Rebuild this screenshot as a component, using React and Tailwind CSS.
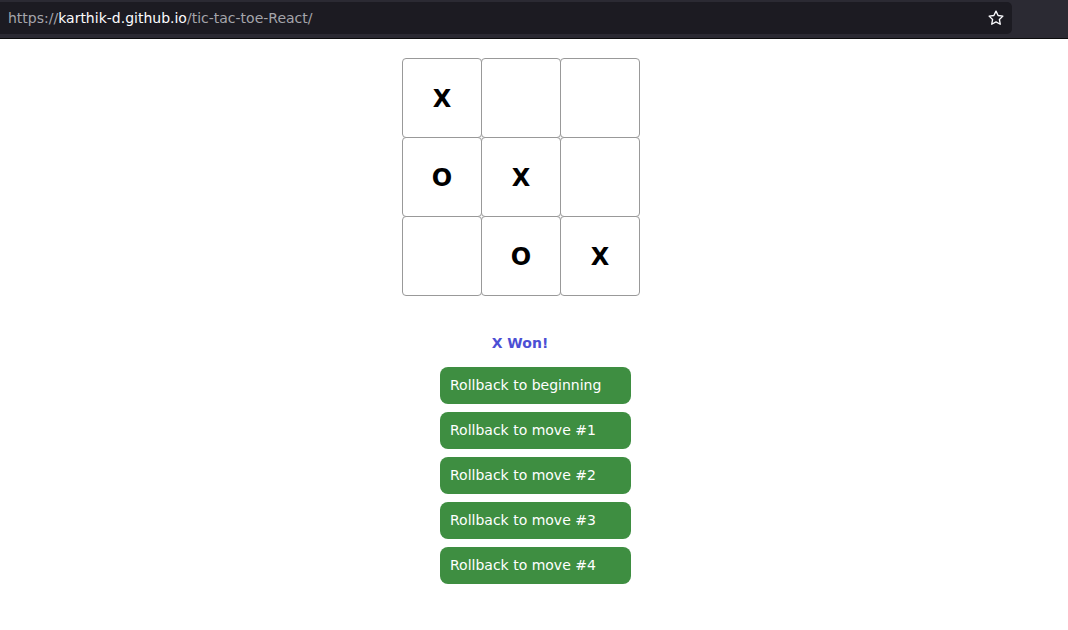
import React from "react";

const board = ["X", "", "", "O", "X", "", "", "O", "X"];
const moves = ["Rollback to beginning", "Rollback to move #1", "Rollback to move #2", "Rollback to move #3", "Rollback to move #4"];

function Star() {
  return (
    <svg width="18" height="18" viewBox="0 0 24 24" fill="none" stroke="#fbfbfe" strokeWidth="1.8" strokeLinejoin="round">
      <path d="M12 2.8l2.8 5.9 6.4.8-4.7 4.4 1.2 6.4L12 17.2l-5.7 3.1 1.2-6.4-4.7-4.4 6.4-.8z" />
    </svg>
  );
}

export default function App() {
  return (
    <div className="w-[1068px] h-[630px] bg-white overflow-hidden" style={{ fontFamily: '"DejaVu Sans", sans-serif' }}>
      <div className="h-[39px] bg-[#2b2a33] border-b border-[#0c0c0d] pt-[2px] flex">
        <div className="w-[1012px] h-[32px] bg-[#1c1b22] rounded-r-[5px] flex items-center pl-[8px] pr-[7px] justify-between">
          <div className="text-[14px] text-[#a5a5ab] tracking-[0px]">
            https://<span className="text-[#fbfbfe]">karthik-d.github.io</span>/tic-tac-toe-React/
          </div>
          <Star />
        </div>
      </div>
      <div className="flex flex-col items-start pl-[402px] pt-[19px]">
        <div className="flex flex-col">
          {[0, 1, 2].map((r) => (
            <div key={r} className="flex -mb-px">
              {[0, 1, 2].map((c) => (
                <div
                  key={c}
                  className="w-[80px] h-[80px] -mr-px border border-[#999] rounded-[4px] bg-white flex items-center justify-center pt-[2px] text-[24px] font-bold text-black"
                >
                  {board[r * 3 + c]}
                </div>
              ))}
            </div>
          ))}
        </div>
        <div className="w-[236px] text-center mt-[40px] text-[14px] font-bold text-[#4c4fd4] leading-[17px]">X Won!</div>
        <div className="flex flex-col gap-[8px] ml-[38px] mt-[15px]">
          {moves.map((m) => (
            <button
              key={m}
              className="w-[191px] h-[37px] rounded-[8px] bg-[#3e8e41] text-white text-[14px] text-left pl-[10px]"
            >
              {m}
            </button>
          ))}
        </div>
      </div>
    </div>
  );
}
